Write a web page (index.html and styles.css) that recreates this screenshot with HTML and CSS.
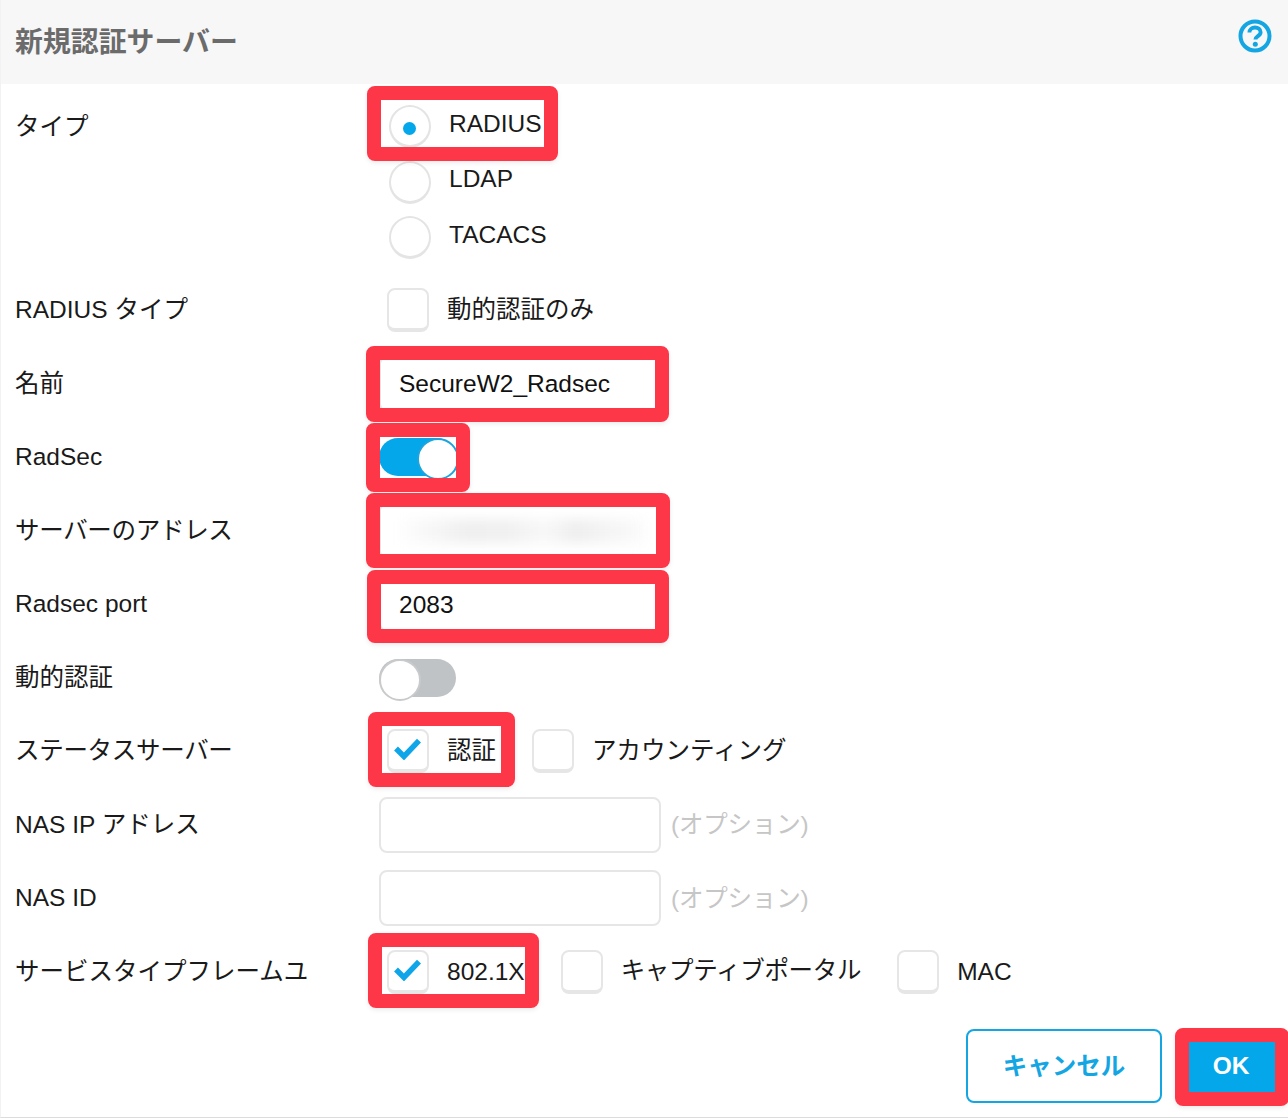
FILE: index.html
```html
<!DOCTYPE html>
<html lang="ja">
<head>
<meta charset="utf-8">
<title>新規認証サーバー</title>
<link rel="stylesheet" href="styles.css">
</head>
<body>
<div class="dialog">
  <header class="head">
    <h1 class="title">新規認証サーバー</h1>
    <svg class="help" viewBox="0 0 34 34" aria-label="help">
      <circle cx="17" cy="17" r="14.5" fill="none" stroke="#14a5e3" stroke-width="4"/>
      <path d="M11.4 13.6c0-3.1 2.4-5.1 5.6-5.1s5.6 1.9 5.6 4.7c0 3.9-5.2 3.9-5.2 7.4" fill="none" stroke="#14a5e3" stroke-width="3.9"/>
      <circle cx="17.3" cy="25.2" r="2.5" fill="#14a5e3"/>
    </svg>
  </header>

  <form class="form">
    <div class="row row-type">
      <div class="label">タイプ</div>
      <div class="radios">
        <div class="radio-item"><span class="radio on"></span><span>RADIUS</span></div>
        <div class="radio-item"><span class="radio"></span><span>LDAP</span></div>
        <div class="radio-item"><span class="radio"></span><span>TACACS</span></div>
      </div>
    </div>
    <div class="row">
      <div class="label lat">RADIUS タイプ</div>
      <div class="value checks"><div class="check-item"><span class="check"></span><span class="ja">動的認証のみ</span></div></div>
    </div>
    <div class="row">
      <div class="label">名前</div>
      <div class="value"><input class="field" value="SecureW2_Radsec"></div>
    </div>
    <div class="row">
      <div class="label lat">RadSec</div>
      <div class="value"><span class="toggle on"></span></div>
    </div>
    <div class="row">
      <div class="label tight">サーバーのアドレス</div>
      <div class="value"><div class="field blurred"><span class="smear"></span></div></div>
    </div>
    <div class="row">
      <div class="label lat">Radsec port</div>
      <div class="value"><input class="field field-port" value="2083"></div>
    </div>
    <div class="row">
      <div class="label">動的認証</div>
      <div class="value"><span class="toggle"></span></div>
    </div>
    <div class="row">
      <div class="label tight lat">ステータスサーバー</div>
      <div class="value checks">
        <div class="check-item"><span class="check"><svg viewBox="0 0 32 26" class="tick"><path d="M3 13l9 9L29 4" fill="none" stroke="#0ea5e9" stroke-width="6.2"/></svg></span><span class="ja">認証</span></div>
        <div class="check-item"><span class="check"></span><span class="ja">アカウンティング</span></div>
      </div>
    </div>
    <div class="row">
      <div class="label">NAS IP アドレス</div>
      <div class="value"><input class="field"><span class="hint">(オプション)</span></div>
    </div>
    <div class="row">
      <div class="label lat">NAS ID</div>
      <div class="value"><input class="field"><span class="hint">(オプション)</span></div>
    </div>
    <div class="row">
      <div class="label">サービスタイプフレームユ</div>
      <div class="value checks">
        <div class="check-item"><span class="check"><svg viewBox="0 0 32 26" class="tick"><path d="M3 13l9 9L29 4" fill="none" stroke="#0ea5e9" stroke-width="6.2"/></svg></span><span>802.1X</span></div>
        <div class="check-item"><span class="check"></span><span class="ja tight">キャプティブポータル</span></div>
        <div class="check-item"><span class="check"></span><span>MAC</span></div>
      </div>
    </div>
  </form>

  <footer class="foot">
    <button class="btn cancel" type="button">キャンセル</button>
    <button class="btn ok" type="button">OK</button>
  </footer>

  <div class="mark mark-radius"></div>
  <div class="mark mark-name"></div>
  <div class="mark mark-radsec"></div>
  <div class="mark mark-addr"></div>
  <div class="mark mark-port"></div>
  <div class="mark mark-auth"></div>
  <div class="mark mark-dot1x"></div>
  <div class="mark mark-ok"></div>
</div>
</body>
</html>
```
FILE: styles.css
```css
* { box-sizing: border-box; }
html, body { margin: 0; padding: 0; background: #fff; }
body {
  font-family: "Liberation Sans", "Noto Sans CJK JP", sans-serif;
  font-size: 24.5px;
  color: #1a1a1a;
}
.dialog {
  position: relative;
  width: 1288px;
  height: 1118px;
  border-bottom: 1px solid #dcdcdc;
  border-left: 1px solid #f2f2f2;
  overflow: hidden;
}
.head {
  height: 84px;
  background: #f7f7f7;
  display: flex;
  justify-content: space-between;
  padding: 0 16px 0 14px;
}
.title {
  margin: 0;
  font-size: 27.9px;
  font-weight: 700;
  line-height: 86px;
  color: #6b6b6b;
}
.help { width: 34px; height: 34px; margin-top: 19px; }
.form { display: flex; flex-direction: column; margin-top: 1px; }
.row { display: flex; align-items: center; height: 73.5px; }
.row-type { height: 188.5px; align-items: flex-start; padding-top: 14px; }
.label { width: 378px; padding-left: 14px; flex: none; line-height: 55px; }
.lat { padding-bottom: 2px; }
.tight { letter-spacing: -.3px; }
.value { display: flex; align-items: center; }
.radios { display: flex; flex-direction: column; padding-left: 10px; }
.radio-item { display: flex; align-items: center; height: 55.5px; gap: 18px; }
.radio-item span:last-child { position: relative; top: -3px; }
.radio {
  width: 42px; height: 43px;
  border: 2px solid #e4e4e4;
  border-bottom-width: 3px;
  border-radius: 50%;
  background: #fff;
  display: flex; align-items: center; justify-content: center;
}
.radio.on::after {
  content: "";
  width: 13px; height: 13px;
  border-radius: 50%;
  background: #04a7ea;
  margin: 5px 1px 0 0;
}
.checks { padding-left: 8px; gap: 36px; }
.check-item { display: flex; align-items: center; gap: 18px; }
.ja { position: relative; top: -3px; }
.check {
  width: 42px; height: 44px;
  flex: none;
  border: 2px solid #e6e6e6;
  border-bottom-width: 4px;
  border-radius: 8px;
  background: #fff;
  display: flex; align-items: center; justify-content: center;
}
.tick { width: 29px; height: 23px; margin: 0 2px 3px 0; }
.field {
  width: 282px; height: 56px;
  border: 2px solid #e6e6e6;
  border-radius: 8px;
  background: #fff;
  padding: 0 0 0 18px;
  font: inherit;
  color: #111;
  display: block;
  outline: none;
}
.field-port { padding-top: 2px; }
.blurred { display: flex; align-items: center; padding-left: 14px; }
.smear {
  width: 250px; height: 24px;
  filter: blur(6px);
  background: linear-gradient(90deg, #fff 0%, #efefef 28%, #f0f0f0 45%, #f8f8f8 60%, #eeeeee 72%, #fbfbfb 100%);
}
.hint { margin-left: 10px; color: #c6c6c6; letter-spacing: -.2px; position: relative; top: -2px; }
.toggle {
  position: relative;
  display: block;
  width: 77px; height: 38px;
  border-radius: 20px;
  background: #bfc3c6;
}
.toggle::after {
  content: "";
  position: absolute;
  left: 0; top: 0;
  width: 38px; height: 38px;
  border-radius: 50%;
  background: #fff;
  border: 2px solid #c8cacc;
}
.toggle.on { background: #04a7ea; }
.toggle.on::after { left: 38px; border-color: #1ea3dc; }
.foot {
  display: flex;
  justify-content: flex-end;
  gap: 19px;
  padding: 20px 7px 0 0;
}
.btn {
  height: 74px;
  font: inherit;
  font-weight: 700;
  border-radius: 8px;
}
.cancel { width: 196px; background: #fff; border: 2px solid #14a5e3; color: #14a5e3; padding-bottom: 3px; }
.ok { width: 100px; background: #04a7ea; border: 0; color: #fff; }
.mark {
  position: absolute;
  border: 14px solid #fd3648;
  border-radius: 8px;
  box-shadow: 0 2px 5px rgba(0, 0, 0, .08);
  pointer-events: none;
}
.mark-radius { left: 366px; top: 86px; width: 191px; height: 75px; }
.mark-name { left: 365px; top: 346px; width: 303px; height: 76px; }
.mark-radsec { left: 365px; top: 423px; width: 104px; height: 69px; }
.mark-addr { left: 365px; top: 493px; width: 304px; height: 75px; }
.mark-port { left: 366px; top: 570px; width: 302px; height: 73px; }
.mark-auth { left: 367px; top: 712px; width: 147px; height: 75px; }
.mark-dot1x { left: 367px; top: 933px; width: 171px; height: 75px; }
.mark-ok { left: 1174px; top: 1028px; width: 114px; height: 78px; }
```
